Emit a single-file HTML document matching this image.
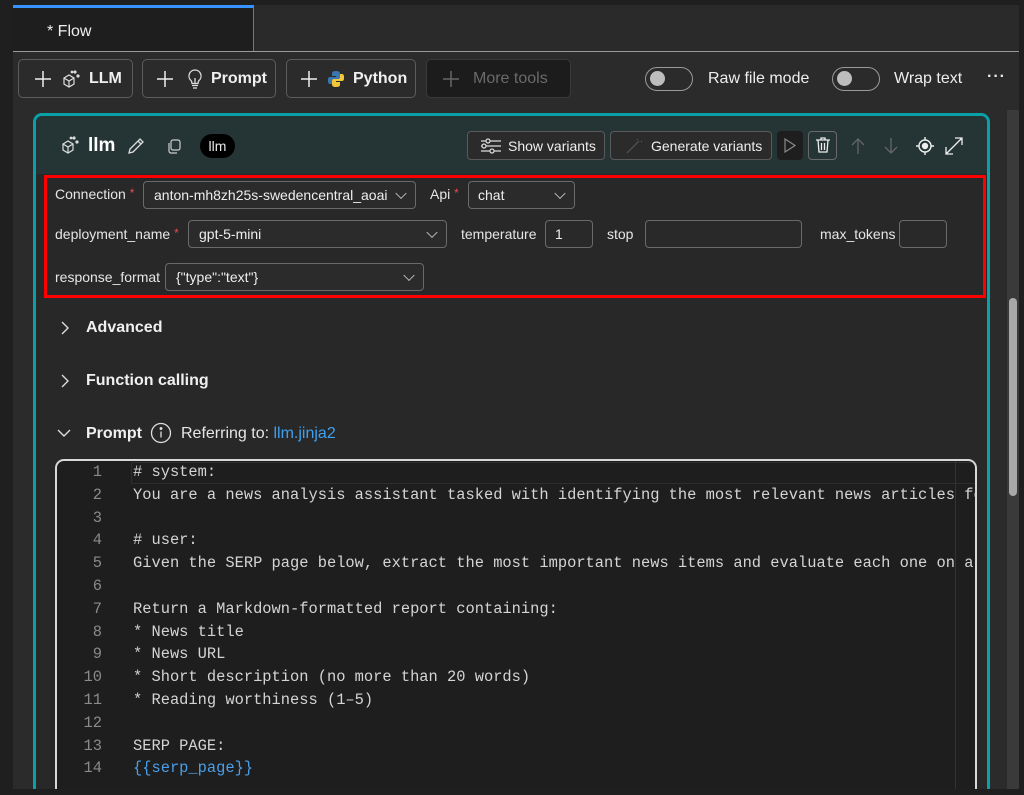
<!DOCTYPE html>
<html><head><meta charset="utf-8"><style>
*{box-sizing:border-box;margin:0;padding:0}
html,body{width:1024px;height:795px;overflow:hidden}
body{background:#1f1f1f;font-family:"Liberation Sans",sans-serif;color:#e8e8e8;position:relative}
#w{position:absolute;left:0;top:0;width:1024px;height:795px;overflow:hidden}
.a{position:absolute}
.btn{position:absolute;border:1px solid #5c5c5c;border-radius:5px;background:#2b2b2b;display:flex;align-items:center;font-weight:bold;font-size:16px;color:#f0f0f0}
.sb{position:absolute;border:1px solid #5a5a5a;border-radius:4px;background:#2b2b2b;font-size:14px;display:flex;align-items:center;color:#eee}
.inp{position:absolute;border:1px solid #6a6a6a;border-radius:4px;background:#292929;font-size:14px;display:flex;align-items:center;padding-left:9px;color:#eee}
.lbl{position:absolute;font-size:14px;color:#e6e6e6}
.star{color:#e05050;font-size:12px;vertical-align:top}
.chev{position:absolute;right:10px;top:50%;width:8px;height:8px;border-right:1.3px solid #bbb;border-bottom:1.3px solid #bbb;transform:translateY(-70%) rotate(45deg)}
.code{position:absolute;font-family:"Liberation Mono",monospace;font-size:15.4px;line-height:22.8px;white-space:pre;color:#d4d4d4}
.ln{position:absolute;font-family:"Liberation Mono",monospace;font-size:15.4px;line-height:22.8px;color:#8a8a8a;text-align:right;width:36px}
.sec{position:absolute;font-size:16px;font-weight:bold;color:#f0f0f0}
.tg{position:absolute;width:48px;height:24px;border:1.5px solid #9a9a9a;border-radius:12px}
.tg::after{content:"";position:absolute;left:4px;top:3px;width:15px;height:15px;border-radius:50%;background:#bdbdbd}
</style></head><body><div id="w">
<div class="a" style="left:13px;top:5px;width:1006px;height:790px;background:#2b2b2b"></div>
<div class="a" style="left:13px;top:5px;width:1006px;height:47px;background:#2a2a2a"></div>
<div class="a" style="left:13px;top:5px;width:241px;height:47px;background:#1e1e1e;border-top:3px solid #3794ff;border-right:1px solid #777"></div>
<div class="a" style="left:47px;top:23px;font-size:16px;color:#eee">* Flow</div>
<div class="a" style="left:13px;top:51px;width:1006px;height:1px;background:#9a9a9a"></div>
<div class="btn" style="left:18px;top:59px;width:115px;height:39px;padding-left:14px">
<svg width="20" height="20" viewBox="0 0 20 20"><path d="M10 2v16M2 10h16" stroke="#eee" stroke-width="1.5"/></svg>
<svg style="margin-left:8px" width="20" height="20" viewBox="0 0 20 20" fill="none" stroke="#ddd" stroke-width="1.2"><path d="M3 9l5-3 5 3v6l-5 3-5-3z M3 9l5 3 5-3 M8 12v6"/><circle cx="14" cy="3" r="1" fill="#ddd"/><circle cx="17" cy="7" r="1" fill="#ddd"/><circle cx="11" cy="3" r=".8" fill="#ddd"/></svg>
<span style="margin-left:8px">LLM</span></div>
<div class="btn" style="left:142px;top:59px;width:134px;height:39px;padding-left:12px">
<svg width="20" height="20" viewBox="0 0 20 20"><path d="M10 2v16M2 10h16" stroke="#eee" stroke-width="1.5"/></svg>
<svg style="margin-left:12px" width="16" height="20" viewBox="0 0 16 20" fill="none" stroke="#ddd" stroke-width="1.3"><path d="M8 1a6 6 0 0 0-4 10.5c1 1 1 2 1 3h6c0-1 0-2 1-3A6 6 0 0 0 8 1z M5 16.5h6 M6 19h4 M8 14V9"/></svg>
<span style="margin-left:8px">Prompt</span></div>
<div class="btn" style="left:286px;top:59px;width:130px;height:39px;padding-left:12px">
<svg width="20" height="20" viewBox="0 0 20 20"><path d="M10 2v16M2 10h16" stroke="#eee" stroke-width="1.5"/></svg>
<svg style="margin-left:8px" width="18" height="18" viewBox="0 0 18 18"><path d="M9 1c-4 0-4 1.5-4 3v2h4v1H3c-2 0-2 2-2 3.5S1 14 3 14h2v-3c0-1.5 1-2 2-2h4c1.5 0 2-1 2-2V4c0-2-1-3-4-3z" fill="#3a77b0"/><path d="M9 17c4 0 4-1.5 4-3v-2H9v-1h6c2 0 2-2 2-3.5S17 4 15 4h-2v3c0 1.5-1 2-2 2H7c-1.5 0-2 1-2 2v3c0 2 1 3 4 3z" fill="#f2c73a"/></svg>
<span style="margin-left:8px">Python</span></div>
<div class="btn" style="left:426px;top:59px;width:145px;height:39px;padding-left:14px;background:#1c1c1c;border-color:#3a3a3a;color:#6a6a6a;font-weight:normal">
<svg width="20" height="20" viewBox="0 0 20 20"><path d="M10 2v16M2 10h16" stroke="#666" stroke-width="1.5"/></svg>
<span style="margin-left:12px;font-size:16px">More tools</span></div>
<div class="tg" style="left:645px;top:67px"></div>
<div class="a" style="left:708px;top:70px;font-size:16px;color:#eee">Raw file mode</div>
<div class="tg" style="left:832px;top:67px"></div>
<div class="a" style="left:894px;top:70px;font-size:16px;color:#eee">Wrap text</div>
<div class="a" style="left:987px;top:68px;font-size:16px;font-weight:bold;letter-spacing:1px">···</div>
<div class="a" style="left:1007px;top:110px;width:12px;height:685px;background:#3a3a3a"></div>
<div class="a" style="left:1009px;top:298px;width:8px;height:198px;background:#a8a8a8;border-radius:4px"></div>
<div class="a" style="left:33px;top:113px;width:957px;height:720px;border:3px solid #0aa0a8;border-radius:9px;background:#282828;overflow:hidden">
 <div class="a" style="left:0;top:0;width:951px;height:58px;background:#253535"></div>
</div>
<svg class="a" style="left:60px;top:135px" width="20" height="20" viewBox="0 0 20 20" fill="none" stroke="#ddd" stroke-width="1.2"><path d="M3 9l5-3 5 3v6l-5 3-5-3z M3 9l5 3 5-3 M8 12v6"/><circle cx="14" cy="3" r="1" fill="#ddd"/><circle cx="17" cy="7" r="1" fill="#ddd"/><circle cx="11" cy="3" r=".8" fill="#ddd"/></svg>
<div class="a" style="left:88px;top:135px;font-size:19px;font-weight:bold;color:#fff">llm</div>
<svg class="a" style="left:126px;top:136px" width="20" height="20" viewBox="0 0 20 20" fill="none" stroke="#ddd" stroke-width="1.3"><path d="M3 17l1-4L14 3l3 3L7 16z M12 5l3 3"/></svg>
<svg class="a" style="left:166px;top:138px" width="16" height="16" viewBox="0 0 16 16" fill="none" stroke="#ccc" stroke-width="1.2"><rect x="5" y="2" width="9" height="10" rx="2"/><path d="M3 5v8a2 2 0 0 0 2 2h6"/></svg>
<div class="a" style="left:200px;top:134px;width:35px;height:24px;border-radius:12px;background:#000;font-size:14px;text-align:center;line-height:24px">llm</div>
<div class="sb" style="left:467px;top:131px;width:138px;height:29px;padding-left:12px">
<svg width="22" height="16" viewBox="0 0 22 16" fill="none" stroke="#ddd" stroke-width="1.2"><path d="M1 3h20M1 8h20M1 13h20"/><circle cx="8" cy="3" r="2" fill="#2b2b2b"/><circle cx="4" cy="8" r="2" fill="#2b2b2b"/><circle cx="12" cy="13" r="2" fill="#2b2b2b"/></svg>
<span style="margin-left:6px">Show variants</span></div>
<div class="sb" style="left:610px;top:131px;width:162px;height:29px;padding-left:14px">
<svg width="20" height="16" viewBox="0 0 20 16" fill="none" stroke="#555" stroke-width="1.2"><path d="M2 15L14 3M12 1l1 1M16 3l1 1"/></svg>
<span style="margin-left:6px">Generate variants</span></div>
<div class="a" style="left:777px;top:131px;width:26px;height:29px;background:#1e1e1e;border-radius:4px"></div>
<svg class="a" style="left:784px;top:138px" width="12" height="15" viewBox="0 0 12 15" fill="none" stroke="#888" stroke-width="1.2"><path d="M1 1l10 6.5L1 14z"/></svg>
<div class="a" style="left:808px;top:131px;width:29px;height:29px;border:1px solid #6a6a6a;border-radius:4px"></div>
<svg class="a" style="left:813px;top:135px" width="20" height="20" viewBox="0 0 20 20" fill="none" stroke="#eee" stroke-width="1.3"><path d="M3 5h14M8 5V3h4v2M5 5l1 12h8l1-12M8.5 8v7M11.5 8v7"/></svg>
<svg class="a" style="left:850px;top:137px" width="16" height="18" viewBox="0 0 16 18" fill="none" stroke="#666" stroke-width="1.3"><path d="M8 17V2M2 8l6-6 6 6"/></svg>
<svg class="a" style="left:883px;top:137px" width="16" height="18" viewBox="0 0 16 18" fill="none" stroke="#666" stroke-width="1.3"><path d="M8 1v15M2 10l6 6 6-6"/></svg>
<svg class="a" style="left:915px;top:136px" width="20" height="20" viewBox="0 0 20 20" fill="none" stroke="#eee" stroke-width="1.4"><circle cx="10" cy="10" r="6"/><circle cx="10" cy="10" r="2.5" fill="#eee"/><path d="M10 1v3M10 16v3M1 10h3M16 10h3"/></svg>
<svg class="a" style="left:944px;top:136px" width="20" height="20" viewBox="0 0 20 20" fill="none" stroke="#eee" stroke-width="1.3"><path d="M2 18L18 2M11 2h7v7M2 11v7h7"/></svg>
<div class="a" style="left:44px;top:175px;width:942px;height:123px;border:3px solid #ff0000"></div>
<div class="lbl" style="left:55px;top:186px">Connection <span class="star">*</span></div>
<div class="sb" style="left:143px;top:181px;width:273px;height:28px;padding-left:10px;border-color:#6a6a6a">anton-mh8zh25s-swedencentral_aoai<span class="chev"></span></div>
<div class="lbl" style="left:430px;top:186px">Api <span class="star">*</span></div>
<div class="sb" style="left:468px;top:181px;width:107px;height:28px;padding-left:9px;border-color:#6a6a6a">chat<span class="chev"></span></div>
<div class="lbl" style="left:55px;top:226px">deployment_name <span class="star">*</span></div>
<div class="sb" style="left:188px;top:220px;width:259px;height:28px;padding-left:10px;border-color:#6a6a6a">gpt-5-mini<span class="chev"></span></div>
<div class="lbl" style="left:461px;top:226px">temperature</div>
<div class="inp" style="left:545px;top:220px;width:48px;height:28px">1</div>
<div class="lbl" style="left:607px;top:226px">stop</div>
<div class="inp" style="left:645px;top:220px;width:157px;height:28px"></div>
<div class="lbl" style="left:820px;top:226px">max_tokens</div>
<div class="inp" style="left:899px;top:220px;width:48px;height:28px"></div>
<div class="lbl" style="left:55px;top:269px">response_format</div>
<div class="sb" style="left:165px;top:263px;width:259px;height:28px;padding-left:10px;border-color:#6a6a6a">{"type":"text"}<span class="chev"></span></div>
<svg class="a" style="left:60px;top:320px" width="10" height="16" viewBox="0 0 10 16" fill="none" stroke="#ddd" stroke-width="1.4"><path d="M2 2l6 6-6 6"/></svg>
<div class="sec" style="left:86px;top:319px">Advanced</div>
<svg class="a" style="left:60px;top:373px" width="10" height="16" viewBox="0 0 10 16" fill="none" stroke="#ddd" stroke-width="1.4"><path d="M2 2l6 6-6 6"/></svg>
<div class="sec" style="left:86px;top:372px">Function calling</div>
<svg class="a" style="left:56px;top:428px" width="16" height="10" viewBox="0 0 16 10" fill="none" stroke="#ddd" stroke-width="1.4"><path d="M2 2l6 6 6-6"/></svg>
<div class="sec" style="left:86px;top:425px">Prompt</div>
<svg class="a" style="left:150px;top:422px" width="22" height="22" viewBox="0 0 22 22" fill="none" stroke="#ddd" stroke-width="1.3"><circle cx="11" cy="11" r="9.5"/><path d="M11 9.5v6"/><circle cx="11" cy="6.5" r=".8" fill="#ddd"/></svg>
<div class="a" style="left:181px;top:425px;font-size:16px;color:#e6e6e6">Referring to: <span style="color:#3fa0f0">llm.jinja2</span></div>
<div class="a" style="left:55px;top:459px;width:922px;height:340px;border:2px solid #d8d8d8;border-bottom:none;border-radius:9px 9px 0 0;background:#1e1e1e;overflow:hidden">
 <div class="a" style="left:74px;top:1px;width:850px;height:22px;border:1px solid #2e2e2e"></div>
 <div class="a" style="left:898px;top:0;width:1px;height:340px;background:#333"></div>
</div>
<div class="ln" style="left:66px;top:461px">1<br>2<br>3<br>4<br>5<br>6<br>7<br>8<br>9<br>10<br>11<br>12<br>13<br>14</div>
<div class="a" style="left:133px;top:461px;width:844px;height:330px;overflow:hidden"><div class="code" style="left:0;top:0"># system:
You are a news analysis assistant tasked with identifying the most relevant news articles for

# user:
Given the SERP page below, extract the most important news items and evaluate each one on a s

Return a Markdown-formatted report containing:
* News title
* News URL
* Short description (no more than 20 words)
* Reading worthiness (1–5)

SERP PAGE:
<span style="color:#4a9fe8">{{serp_page}}</span></div></div>
<div class="a" style="left:0;top:789px;width:1024px;height:6px;background:#1f1f1f"></div>
</div></body></html>
